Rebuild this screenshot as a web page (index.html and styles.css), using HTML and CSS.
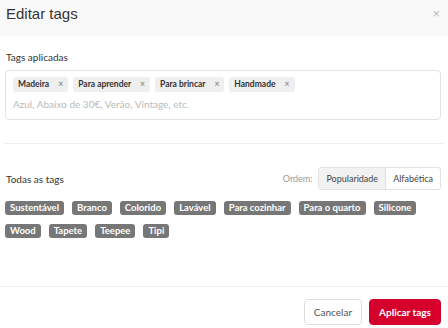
FILE: index.html
```html
<!DOCTYPE html>
<html lang="pt">
<head>
  <meta charset="UTF-8">
  <title>Editar tags</title>
  <link rel="stylesheet" href="styles.css">
</head>
<body>
  <div class="modal">
    <div class="modal-header">
      <h2>Editar tags</h2>
      <span class="close">&times;</span>
    </div>
    <div class="modal-body">
      <div class="section-label">Tags aplicadas</div>
      <div class="tag-input">
        <div class="chips">
          <span class="chip">Madeira <b>&times;</b></span>
          <span class="chip">Para aprender <b>&times;</b></span>
          <span class="chip">Para brincar <b>&times;</b></span>
          <span class="chip">Handmade <b>&times;</b></span>
        </div>
        <div class="placeholder">Azul, Abaixo de 30€, Verão, Vintage, etc.</div>
      </div>
      <hr class="divider">
      <div class="all-head">
        <span class="section-label">Todas as tags</span>
        <div class="order">
          <span class="order-label">Ordem:</span>
          <div class="segment">
            <span class="seg active">Popularidade</span>
            <span class="seg">Alfabética</span>
          </div>
        </div>
      </div>
      <div class="tag-list">
        <span class="tag">Sustentável</span>
        <span class="tag">Branco</span>
        <span class="tag">Colorido</span>
        <span class="tag">Lavável</span>
        <span class="tag">Para cozinhar</span>
        <span class="tag">Para o quarto</span>
        <span class="tag">Silicone</span>
        <span class="tag">Wood</span>
        <span class="tag">Tapete</span>
        <span class="tag">Teepee</span>
        <span class="tag">Tipi</span>
      </div>
    </div>
    <div class="modal-footer">
      <button class="btn">Cancelar</button>
      <button class="btn primary">Aplicar tags</button>
    </div>
  </div>
</body>
</html>
```

FILE: styles.css
```css
body {
  margin: 0;
  font-family: Lato, 'Open Sans', Arial, sans-serif;
  background-color: white;
  color: #333;
}
.modal {
  width: 448px;
  height: 328px;
  display: flex;
  flex-direction: column;
}
.modal-header {
  height: 36px;
  box-sizing: border-box;
  background-color: #f9f9f9;
  display: flex;
  align-items: flex-start;
  justify-content: space-between;
  padding: 5px 8px 0 6px;
}
.modal-header h2 {
  margin: 0;
  font-family: 'Liberation Sans', Arial, sans-serif;
  font-weight: normal;
  font-size: 15px;
  line-height: 17px;
  color: #333;
}
.close {
  font-family: 'Liberation Sans', Arial, sans-serif;
  font-size: 13px;
  line-height: 17px;
  color: #bbb;
}
.modal-body {
  padding: 15px 7px 0 5px;
  flex: 1;
}
.section-label {
  font-size: 10px;
  color: #333;
  padding-left: 1px;
}
.tag-input {
  margin-top: 7px;
  height: 50px;
  border: 1px solid #e2e2e2;
  border-radius: 4px;
  padding: 6px 7px;
  box-sizing: border-box;
}
.chips {
  display: flex;
  gap: 5px;
}
.chip {
  background-color: #efefef;
  border-radius: 3px;
  font-size: 8.5px;
  font-weight: bold;
  color: #333;
  padding: 2px 5px;
  line-height: 11px;
}
.chip b {
  color: #999;
  margin-left: 7px;
}
.placeholder {
  margin-top: 6px;
  font-size: 10px;
  color: #bbb;
}
.divider {
  border: none;
  border-top: 1px solid #ececec;
  margin: 23px -3px 0 -1px;
}
.all-head {
  margin-top: 23px;
  display: flex;
  justify-content: space-between;
  align-items: center;
}
.order {
  display: flex;
  align-items: center;
  gap: 6px;
}
.order-label {
  font-size: 9px;
  color: #999;
}
.segment {
  display: flex;
  border: 1px solid #e2e2e2;
  border-radius: 3px;
  overflow: hidden;
}
.seg {
  font-size: 9px;
  color: #444;
  padding: 0 7px;
  line-height: 21px;
}
.seg.active {
  background-color: #f2f2f2;
  border-right: 1px solid #e2e2e2;
}
.tag-list {
  margin-top: 11px;
  display: flex;
  flex-wrap: wrap;
  gap: 9px 8px;
  width: 430px;
}
.tag {
  background-color: #777;
  color: white;
  font-size: 9.5px;
  font-weight: bold;
  border-radius: 3px;
  padding: 0 5px;
  line-height: 14px;
}
.modal-footer {
  border-top: 1px solid #f0f0f0;
  height: 42px;
  box-sizing: border-box;
  display: flex;
  justify-content: flex-end;
  align-items: flex-start;
  gap: 7px;
  padding: 12px 7px 0 0;
}
.btn {
  height: 26px;
  padding: 0 9px;
  font-family: Lato, Arial, sans-serif;
  font-size: 10px;
  border: 1px solid #ddd;
  border-radius: 4px;
  background-color: white;
  color: #555;
}
.btn.primary {
  background-color: #d5002b;
  border-color: #d5002b;
  color: white;
  font-weight: bold;
}
```
